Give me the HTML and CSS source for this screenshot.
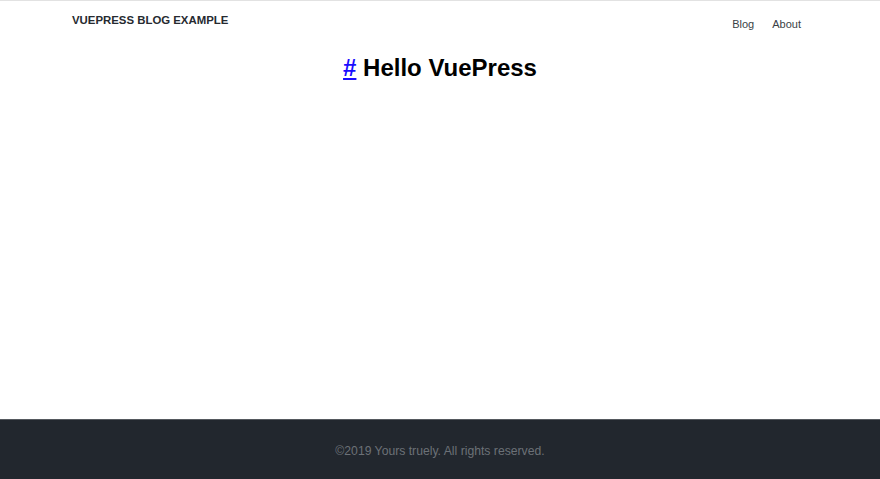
FILE: index.html
```html
<!DOCTYPE html>
<html>
<head>
<meta charset="utf-8">
<link rel="stylesheet" href="styles.css">
</head>
<body>
<div class="page">
  <header class="header">
    <div class="brand">VUEPRESS BLOG EXAMPLE</div>
    <nav class="nav">
      <a class="nav-link" href="#">Blog</a>
      <a class="nav-link" href="#">About</a>
    </nav>
  </header>
  <main class="main">
    <h1 class="title"><a class="anchor" href="#">#</a> Hello VuePress</h1>
  </main>
  <footer class="footer">
    <p class="copy">©2019 Yours truely. All rights reserved.</p>
  </footer>
</div>
</body>
</html>
```
FILE: styles.css
```css
html, body {
  margin: 0;
  padding: 0;
  background: #fff;
}
.page {
  min-height: 100vh;
  display: flex;
  flex-direction: column;
  border-top: 1px solid #e2e2e2;
  box-sizing: border-box;
  font-family: "Liberation Sans", Arial, sans-serif;
}
.header {
  display: flex;
  justify-content: space-between;
  padding: 0 79px 0 72px;
  height: 44px;
}
.brand {
  font-size: 11.4px;
  font-weight: 700;
  color: #262a30;
  padding-top: 13px;
}
.nav {
  display: flex;
  gap: 18px;
  padding-top: 17px;
}
.nav-link {
  font-size: 11px;
  color: #3a3f45;
  text-decoration: none;
}
.main {
  flex: 1;
  display: flex;
  justify-content: center;
}
.title {
  margin: 9px 0 0;
  font-size: 24px;
  font-weight: 700;
  color: #000;
}
.anchor {
  color: #1a0dff;
  text-decoration: underline;
}
.footer {
  height: 60px;
  box-sizing: border-box;
  background: #22272e;
  border-top: 1px solid #55595e;
  display: flex;
  align-items: center;
  justify-content: center;
}
.copy {
  margin: 0;
  padding-top: 2px;
  font-size: 12.2px;
  color: #6c7177;
}
```
